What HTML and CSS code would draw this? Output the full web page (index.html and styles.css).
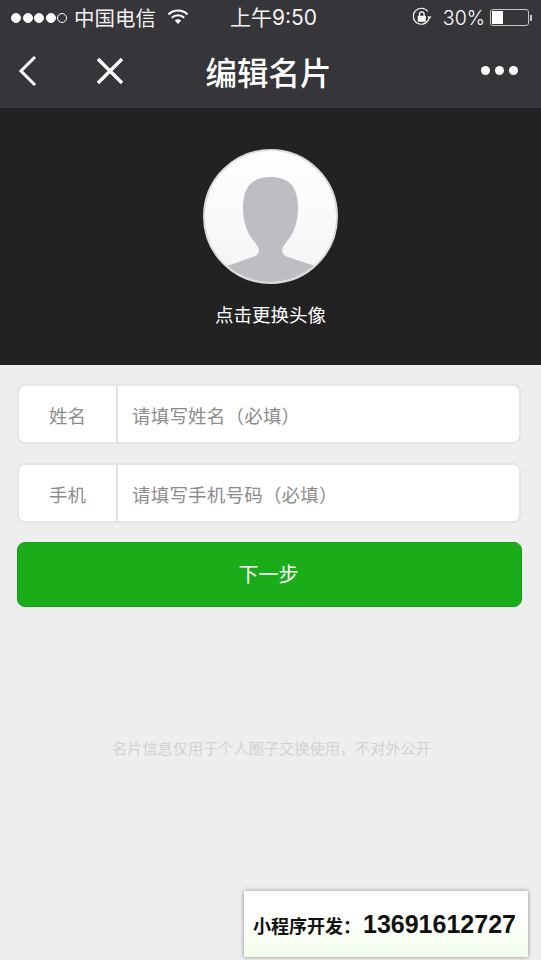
FILE: index.html
```html
<!DOCTYPE html>
<html lang="zh-CN">
<head>
<meta charset="utf-8">
<title>编辑名片</title>
<link rel="stylesheet" href="styles.css">
</head>
<body>
<header class="top">
  <div class="status">
    <div class="st-left">
      <span class="dots"><i></i><i></i><i></i><i></i><i class="off"></i></span>
      <span class="carrier">中国电信</span>
      <svg class="wifi" width="22" height="16" viewBox="0 0 22 16"><path d="M1.5 5.5a13.5 13.5 0 0 1 19 0" fill="none" stroke="#fff" stroke-width="2"/><path d="M4.8 8.8a8.8 8.8 0 0 1 12.4 0" fill="none" stroke="#fff" stroke-width="2"/><path d="M7.8 11.6 11 15l3.2-3.4a4.6 4.6 0 0 0-6.4 0z" fill="#fff"/></svg>
    </div>
    <span class="time">上午9:50</span>
    <div class="st-right">
      <svg class="lock" width="20" height="20" viewBox="0 0 20 20"><path d="M17 11.5A8 8 0 1 1 15.8 4.5" fill="none" stroke="#fff" stroke-width="1.1"/><path d="M15 9.4h4.6l-2.3 2.8z" fill="#fff"/><rect x="5.8" y="8.8" width="8" height="6" rx=".8" fill="#fff"/><path d="M7.5 9V7.2a2.3 2.3 0 0 1 4.6 0V9" fill="none" stroke="#fff" stroke-width="1.3"/></svg>
      <span class="pct">30%</span>
      <span class="battery"><span class="cell"><span class="fill"></span></span><span class="nub"></span></span>
    </div>
  </div>
  <nav class="nav">
    <div class="nav-left">
      <svg width="20" height="32" viewBox="0 0 20 32"><path d="M17 2 3 16l14 14" fill="none" stroke="#fff" stroke-width="3"/></svg>
      <svg width="28" height="28" viewBox="0 0 28 28"><path d="M2 2l24 24M26 2 2 26" fill="none" stroke="#fff" stroke-width="3.4"/></svg>
    </div>
    <h1 class="title">编辑名片</h1>
    <div class="more"><i></i><i></i><i></i></div>
  </nav>
</header>
<section class="hero">
  <div class="avatar">
    <svg width="131" height="131" viewBox="0 0 131 131"><path d="M22 115 48 106c6-2 7-6 5-10-3-6-15-14-15-40 0-20 9-30 27.500-30S93 36 93 56c0 26-12 34-15 40-2 4-1 8 5 10l27 9c-12 11-28 16-44.500 16S34 126 22 115z" fill="#bcbec1"/></svg>
  </div>
  <p class="hint">点击更换头像</p>
</section>
<main class="form">
  <div class="row"><span class="label">姓名</span><span class="holder">请填写姓名（必填）</span></div>
  <div class="row"><span class="label">手机</span><span class="holder">请填写手机号码（必填）</span></div>
  <button class="next">下一步</button>
  <p class="note">名片信息仅用于个人圈子交换使用，不对外公开</p>
</main>
<aside class="ad">小程序开发：<b>13691612727</b></aside>
</body>
</html>
```

FILE: styles.css
```css
* { box-sizing: border-box; }
html, body { margin: 0; padding: 0; }
body {
  width: 541px;
  height: 960px;
  overflow: hidden;
  position: relative;
  background: #eeeeee;
  font-family: "Noto Sans CJK SC", "Noto Sans", sans-serif;
}
.top { height: 108px; background: #36353a; color: #fff; }
.status {
  height: 35px;
  display: grid;
  grid-template-columns: 1fr auto 1fr;
  align-items: center;
  padding: 0 9px 0 11px;
  font-size: 20px;
}
.st-left, .st-right { display: flex; align-items: center; }
.st-right { justify-content: flex-end; }
.dots { display: flex; gap: 1.5px; }
.dots i { width: 10px; height: 10px; border-radius: 50%; background: #fff; border: 1px solid #fff; }
.dots i.off { background: transparent; }
.carrier { margin-left: 7px; font-size: 20.500px; line-height: 35px; color: #f2f2f2; }
.wifi { margin-left: 11px; margin-top: -2px; }
.time { font-size: 21px; line-height: 35px; color: #f2f2f2; margin-left: 4px; font-family: "Inter", "Noto Sans CJK SC", sans-serif; }
.lock { margin-right: 11px; margin-top: -1px; }
.pct { font-family: "Inter", sans-serif; font-size: 19.500px; font-weight: 300; margin-right: 5px; }
.battery { display: flex; align-items: center; }
.cell { width: 39px; height: 17px; border: 1px solid #c8c8c8; border-radius: 3px; padding: 1px; display: block; }
.fill { display: block; width: 11px; height: 100%; background: #fff; }
.nub { width: 2px; height: 6px; background: #c8c8c8; margin-left: 1px; }
.nav {
  height: 73px;
  display: grid;
  grid-template-columns: 1fr auto 1fr;
  align-items: center;
  padding: 0 23px 2px 18px;
}
.nav-left { display: flex; align-items: center; gap: 58px; }
.title { margin: 0 0 0 1px; font-size: 31.500px; font-weight: 500; line-height: 40px; }
.more { display: flex; justify-content: flex-end; gap: 5px; }
.more i { width: 9px; height: 9px; margin: 0; border-radius: 50%; background: #fff; }
.hero {
  height: 257px;
  background: #222222;
  display: flex;
  flex-direction: column;
  align-items: center;
  padding-top: 41px;
}
.avatar {
  width: 135px;
  height: 135px;
  border-radius: 50%;
  background: linear-gradient(#ffffff, #f4f4f5);
  border: 2px solid #dcdcdc;
  overflow: hidden;
}
.avatar svg { display: block; }
.hint { margin: 17px 0 0; font-size: 18.500px; line-height: 26px; color: #fff; }
.form { padding: 19px 19px 0 17px; display: flex; flex-direction: column; }
.row {
  height: 60px;
  display: flex;
  background: #fff;
  border: 2px solid #e5e5e5;
  border-radius: 8px;
  margin-bottom: 19px;
  width: 504px;
  color: #8c8c8c;
  font-size: 18.500px;
}
.label { width: 99px; border-right: 2px solid #e2e2e2; text-align: center; line-height: 58px; height: 56px; }
.holder { padding-left: 14px; line-height: 58px; height: 56px; letter-spacing: 0.2px; }
.next {
  display: block;
  width: 505px;
  height: 65px;
  background: #1aad19;
  border: 1px solid #179b16;
  border-radius: 8px;
  color: #fff;
  font: inherit;
  font-size: 20px;
  padding: 0 2px 2px 0;
}
.note { margin: 129px 0 0; padding-left: 4px; text-align: center; font-size: 15.200px; line-height: 22px; color: #d2d2d2; width: 505px; }
.ad {
  position: absolute;
  left: 244px;
  top: 891px;
  width: 284px;
  height: 66px;
  background: linear-gradient(#ffffff 30%, #f2fdeb);
  box-shadow: 0 0 4px rgba(0,0,0,.45);
  color: #111;
  font-family: "Noto Sans CJK SC", sans-serif;
  font-size: 18px;
  font-weight: 700;
  line-height: 66px;
  padding-left: 9px;
  white-space: nowrap;
}
.ad b { font-family: "Liberation Sans", sans-serif; font-size: 25px; font-weight: 700; margin-left: 2px; }
```
